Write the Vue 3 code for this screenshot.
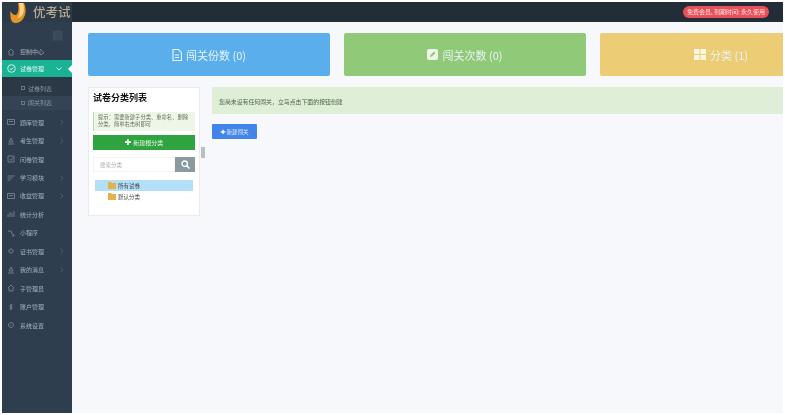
<script setup>
const icons = {
  home: 'M1 4 4 1l3 3M2 4v3h4V4',
  box: 'M.5 1.500h7v5h-7zM2 3.500h4',
  user: 'M4 1 6 5H2zM1 7h6',
  check: 'M1 1h6v6H1zM2.500 4 4 5.500 6 2.500',
  line: 'M.5 2h7M.5 4h5M.5 6h3',
  chart: 'M1 7V4M3 7V2M5 7V3M7 7V1',
  link: 'M1 2h3l1 2M4 4l3 2v1H5',
  dot: 'M4 2a2 2 0 1 0 .01 0M1 4h.5M6.500 4H7',
  dollar: 'M5.500 2H3.500L3 4h2l-.5 2H2.500M4 1v6',
  gear: 'M4 1.500a2.500 2.500 0 1 0 .01 0M4 3.500v1'
}
const menuRest = [
  { t: '题库管理', i: 'box', a: 1 },
  { t: '考生管理', i: 'user', a: 1 },
  { t: '问卷管理', i: 'check' },
  { t: '学习模块', i: 'line', a: 1 },
  { t: '收益管理', i: 'box', a: 1 },
  { t: '统计分析', i: 'chart' },
  { t: '小程序', i: 'link' },
  { t: '证书管理', i: 'dot', a: 1 },
  { t: '我的消息', i: 'user', a: 1 },
  { t: '子管理员', i: 'home' },
  { t: '账户管理', i: 'dollar' },
  { t: '系统设置', i: 'gear' }
]
const cards = [
  { c: 'blue', t: '闯关份数 (0)', i: 'file' },
  { c: 'green', t: '闯关次数 (0)', i: 'edit' },
  { c: 'yellow', t: '分类 (1)', i: 'grid' }
]
</script>

<template>
  <div class="page">
    <header class="top">
      <div class="brand">
        <svg class="logo" viewBox="0 0 17 20" width="17" height="20">
          <path d="M8 0h6c2.500 6 2 12-1 16-3 4.500-9 5-11 2.500C.5 16.500 0 12 .5 8c1.500 3 3.500 4.500 5.500 4C8.500 11 9 5 8 0z" fill="#e8922a" />
          <path d="M9 0h4c1.500 5 1 10-1.500 13-1 1-3 2-4.500 2C10 12.500 10.500 6 9 0z" fill="#f9d584" />
        </svg>
        <span class="brand-name">优考试</span>
      </div>
      <div class="vip">免费会员, 到期时间: 永久使用</div>
    </header>

    <div class="body">
      <aside class="side">
        <div class="toggle-row"><span class="toggle"></span></div>
        <div class="item first">
          <svg class="ico" width="8" height="8" viewBox="0 0 8 8"><path :d="icons.home" /></svg>
          <span>控制中心</span>
        </div>
        <div class="item active">
          <svg class="ico on-ico" width="9" height="9" viewBox="0 0 9 9"><circle cx="4.500" cy="4.500" r="3.800" /><path d="M2.800 4.500 4.200 5.800 6.300 3.300" /></svg>
          <span class="grow">试卷管理</span>
          <svg class="chev" width="6" height="4" viewBox="0 0 6 4"><path d="M.5.5 3 3 5.500.5" fill="none" stroke="#d6f3ec" stroke-width="1" /></svg>
        </div>
        <div class="sub">
          <div class="sub-item"><span class="sub-ico"></span>试卷列表</div>
          <div class="sub-item current"><span class="sub-ico"></span>闯关列表</div>
        </div>
        <div class="rest">
          <div v-for="m in menuRest" :key="m.t" class="item">
            <svg class="ico" width="8" height="8" viewBox="0 0 8 8"><path :d="icons[m.i]" /></svg>
            <span class="grow">{{ m.t }}</span>
            <svg v-if="m.a" class="chev" width="4" height="6" viewBox="0 0 4 6"><path d="M.5.5 3 3 .5 5.500" fill="none" stroke="#4e5c6a" stroke-width="1" /></svg>
          </div>
        </div>
      </aside>

      <main class="main">
        <section class="cards">
          <div v-for="c in cards" :key="c.t" class="card" :class="c.c">
            <svg v-if="c.i === 'file'" width="10" height="12" viewBox="0 0 10 12"><path d="M1 .5h5.500L9.500 3.500v8H1z" fill="none" stroke="#e6f3fc" stroke-width="1.200" /><path d="M3 6h4M3 8.500h4" stroke="#e6f3fc" /></svg>
            <svg v-else-if="c.i === 'edit'" width="11" height="11" viewBox="0 0 11 11"><rect width="11" height="11" rx="2" fill="#eef7e8" /><path d="M3 8l.5-2L7 2.500 8.500 4 5 7.500z" fill="#90c978" /></svg>
            <svg v-else width="12" height="11" viewBox="0 0 12 11"><path d="M0 0h5.500v5H0zM6.500 0H12v5H6.500zM0 6h5.500v5H0zM6.500 6H12v5H6.500z" fill="#fdf6e3" /></svg>
            <span>{{ c.t }}</span>
          </div>
        </section>

        <section class="work">
          <div class="panel">
            <h2>试卷分类列表</h2>
            <p class="tip">提示：需要新建子分类、重命名、删除分类，简单右击树即可</p>
            <div class="add-root"><b>✚</b> 新建根分类</div>
            <div class="search">
              <span class="search-input">搜索分类</span>
              <span class="search-btn">
                <svg width="9" height="9" viewBox="0 0 9 9"><circle cx="3.700" cy="3.700" r="2.700" fill="none" stroke="#fff" stroke-width="1.300" /><path d="M5.700 5.700 8.500 8.500" stroke="#fff" stroke-width="1.500" /></svg>
              </span>
            </div>
            <div class="tree">
              <div class="node on"><svg class="folder" width="8" height="7" viewBox="0 0 8 7"><path d="M0 0h3l1 1h4v6H0z" fill="#e6b04a" /></svg>所有试卷</div>
              <div class="node"><svg class="folder" width="8" height="7" viewBox="0 0 8 7"><path d="M0 0h3l1 1h4v6H0z" fill="#e6b04a" /></svg>默认分类</div>
            </div>
          </div>

          <div class="handle"></div>

          <div class="right">
            <div class="alert">您尚未设有任何闯关，立马点击下面的按钮创建</div>
            <div class="new-btn"><b>✚</b> 新建闯关</div>
          </div>
        </section>
      </main>
    </div>
  </div>
</template>

<style>
html, body { margin: 0; background: #fff; overflow: hidden; }
</style>

<style scoped>
.page {
  width: 785px;
  height: 415px;
  box-sizing: border-box;
  padding: 2px;
  display: flex;
  flex-direction: column;
  overflow: hidden;
  font-family: "Noto Sans CJK SC", "Liberation Sans", sans-serif;
  filter: blur(0.55px);
}
.top {
  height: 20px;
  flex: none;
  background: #232d38;
  display: flex;
  align-items: center;
  justify-content: space-between;
}
.brand {
  width: 70px;
  height: 20px;
  background: #2d3a48;
  display: flex;
  align-items: center;
  gap: 6px;
  padding-left: 8px;
  box-sizing: border-box;
}
.logo { flex: none; margin-top: 1px; position: relative; }
.brand-name { color: #b5aa93; font-size: 12.500px; line-height: 14px; white-space: nowrap; font-weight: 500; }
.vip {
  background: #e8505b;
  color: #ffe3e3;
  font-size: 6px;
  line-height: 12px;
  height: 12px;
  padding: 0 4px;
  border-radius: 6px;
  margin-right: 14px;
  margin-top: -1px;
  white-space: nowrap;
}
.body { flex: 1; display: flex; min-height: 0; }
.side {
  width: 70px;
  flex: none;
  background: #2f3e4e;
  color: #a7b1c2;
  font-size: 6px;
}
.toggle-row { height: 21px; display: flex; justify-content: flex-end; align-items: center; padding-right: 9px; }
.toggle { width: 11px; height: 11px; background: #3c4b5b; border: 1px solid #354453; box-sizing: border-box; margin-top: 5px; }
.item {
  height: 18.450px;
  display: flex;
  align-items: center;
  padding: 0 8px 0 5px;
  gap: 5px;
  white-space: nowrap;
}
.first { height: 17px; }
.grow { flex: 1; }
.ico { flex: none; fill: none; stroke: #76838f; stroke-width: 0.9; }
.active { background: #1ab394; color: #e8f8f4; height: 17px; position: relative; gap: 4px; }
.active::after {
  content: "";
  position: absolute;
  right: 0;
  top: 4.500px;
  border: 4px solid transparent;
  border-right-color: #fff;
}
.active .chev { margin-right: 2px; }
.on-ico { stroke: #e4f8f3; }
.sub { padding-top: 4px; background: #2b3846; }
.sub-item { height: 14.500px; display: flex; align-items: center; gap: 3px; padding-left: 19px; white-space: nowrap; color: #8c98a6; }
.current { background: #344454; }
.sub-ico { width: 4px; height: 4px; border: 1px solid #6a7785; box-sizing: border-box; }
.rest { padding-top: 3px; }
.main { flex: 1; background: #f6f8fc; min-width: 0; overflow: hidden; padding: 11px 0 0 16px; }
.cards { display: flex; gap: 14px; }
.card {
  width: 242px;
  height: 43px;
  flex: none;
  border-radius: 2px;
  display: flex;
  align-items: center;
  justify-content: center;
  gap: 4px;
  color: #eaf3f8;
  font-size: 11px;
}
.blue { background: #5aaeec; }
.green { background: #90c978; }
.yellow { background: #eccd75; }
.work { display: flex; margin-top: 11px; align-items: flex-start; }
.panel {
  width: 112px;
  height: 129px;
  flex: none;
  box-sizing: border-box;
  background: #fff;
  border: 1px solid #ebebeb;
  padding: 3px 4px;
}
h2 { margin: 0; font-size: 9px; line-height: 14px; color: #111; font-weight: 700; }
.tip {
  margin: 7px 0 0;
  background: #eef6ea;
  border-left: 1px solid #b7dba8;
  color: #5f6c58;
  font-size: 5.300px;
  line-height: 7px;
  padding: 2px 2px 2px 4px;
  height: 19px;
  box-sizing: border-box;
}
.add-root {
  margin-top: 4px;
  height: 15px;
  background: #2fa33f;
  color: #e9f7ea;
  font-size: 6px;
  display: flex;
  align-items: center;
  justify-content: center;
  gap: 2px;
}
.add-root b { font-size: 8px; color: #fff; font-family: "DejaVu Sans", sans-serif; }
.search { display: flex; margin-top: 7px; height: 15px; }
.search-input { flex: 1; font-size: 5.500px; color: #aaa; line-height: 15px; padding-left: 6px; border: 1px solid #f4f4f4; box-sizing: border-box; }
.search-btn { width: 20px; background: #8a9a9e; display: flex; align-items: center; justify-content: center; }
.tree { margin: 8px 2px 0; font-size: 5.500px; color: #444; }
.node { height: 11px; display: flex; align-items: center; gap: 2px; padding-left: 13px; }
.on { background: #b3e0f9; }
.folder { flex: none; }
.handle { width: 4px; height: 11px; background: #b9bec4; margin: 60px 7px 0 1px; flex: none; }
.right { flex: 1; min-width: 0; }
.alert {
  height: 27px;
  background: #dfeed7;
  color: #4f6543;
  font-size: 5.900px;
  line-height: 30px;
  padding-left: 7px;
  white-space: nowrap;
}
.new-btn {
  margin-top: 10px;
  width: 45px;
  height: 15px;
  background: #4285ea;
  color: #e8f0fc;
  font-size: 5.500px;
  border-radius: 1px;
  display: flex;
  align-items: center;
  justify-content: center;
  gap: 1px;
}
.new-btn b { font-size: 6px; color: #fff; font-family: "DejaVu Sans", sans-serif; }
</style>
